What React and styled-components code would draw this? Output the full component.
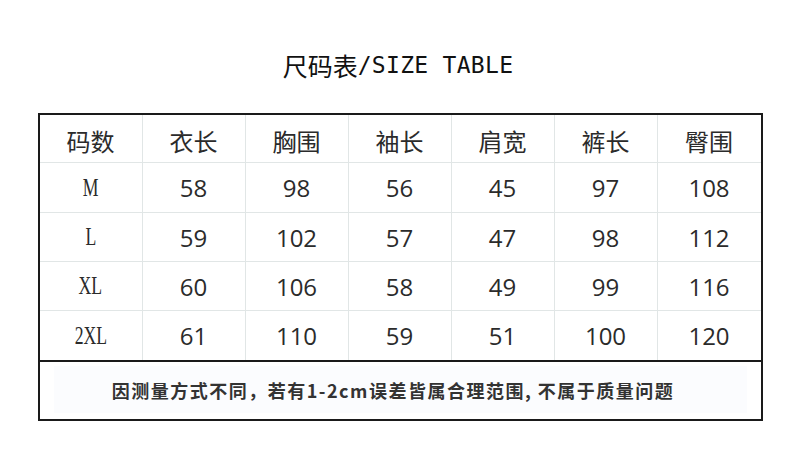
import React from "react";
import styled, { createGlobalStyle } from "styled-components";

const Global = createGlobalStyle`
  html, body { margin: 0; padding: 0; background: #fff; }
  body { width: 800px; height: 456px; overflow: hidden; }
`;

const Page = styled.div`
  width: 800px;
  height: 456px;
  display: flex;
  flex-direction: column;
  align-items: center;
  box-sizing: border-box;
  padding-top: 47px;
`;

const Title = styled.h1`
  margin: 0;
  height: 36px;
  line-height: 36px;
  font-family: "Noto Sans CJK SC", sans-serif;
  font-weight: 400;
  font-size: 25px;
  color: #111;
  display: flex;
  align-items: center;
  padding-right: 4px;
`;

const Latin = styled.span`
  font-family: "DejaVu Sans Mono", "Liberation Mono", monospace;
  font-size: 23px;
  letter-spacing: 0.3px;
`;

const Table = styled.div`
  margin-top: 30px;
  width: 725px;
  box-sizing: border-box;
  border: 2px solid #1a1a1a;
  display: flex;
  flex-direction: column;
`;

const Grid = styled.div`
  display: grid;
  grid-template-columns: repeat(7, 1fr);
  grid-template-rows: 48px 50px 49px 49px 49px;
`;

const Cell = styled.div`
  display: flex;
  align-items: center;
  justify-content: center;
  padding-top: ${(p) => (p.$head ? 4 : 0)}px;
  box-sizing: border-box;
  border-right: ${(p) => (p.$lastCol ? "none" : "1px solid #e1e6e6")};
  border-bottom: ${(p) => (p.$lastRow ? "none" : "1px solid #e1e6e6")};
  color: #2b2b2b;
  font-family: ${(p) =>
    p.$head ? '"Noto Sans CJK SC", sans-serif' : '"Open Sans", "Noto Sans", sans-serif'};
  font-size: 24px;
  font-weight: 400;
`;

const SizeLabel = styled.span`
  display: inline-block;
  font-family: "Liberation Serif", serif;
  font-size: 26px;
  color: #2b2b2b;
  transform: scaleX(0.68);
`;

const Note = styled.div`
  border-top: 2px solid #1a1a1a;
  height: 59px;
  box-sizing: border-box;
  padding: 4px 14px 6px 14px;
  display: flex;
`;

const NoteInner = styled.div`
  flex: 1;
  background: #fbfcfe;
  display: flex;
  align-items: center;
  justify-content: center;
  font-family: "Noto Sans CJK SC", sans-serif;
  font-weight: 700;
  font-size: 18px;
  letter-spacing: 1.5px;
  color: #333;
  padding-right: 14px;
`;

const headers = ["码数", "衣长", "胸围", "袖长", "肩宽", "裤长", "臀围"];
const rows = [
  ["M", "58", "98", "56", "45", "97", "108"],
  ["L", "59", "102", "57", "47", "98", "112"],
  ["XL", "60", "106", "58", "49", "99", "116"],
  ["2XL", "61", "110", "59", "51", "100", "120"],
];

export default function App() {
  return (
    <>
      <Global />
      <Page>
        <Title>
          尺码表<Latin>/SIZE TABLE</Latin>
        </Title>
        <Table>
          <Grid>
            {headers.map((h, i) => (
              <Cell key={h} $head $lastCol={i === 6}>
                {h}
              </Cell>
            ))}
            {rows.map((r, ri) =>
              r.map((v, ci) => (
                <Cell
                  key={ri + "-" + ci}
                  $lastCol={ci === 6}
                  $lastRow={ri === rows.length - 1}
                >
                  {ci === 0 ? <SizeLabel>{v}</SizeLabel> : v}
                </Cell>
              ))
            )}
          </Grid>
          <Note>
            <NoteInner>因测量方式不同，若有1-2cm误差皆属合理范围, 不属于质量问题</NoteInner>
          </Note>
        </Table>
      </Page>
    </>
  );
}
